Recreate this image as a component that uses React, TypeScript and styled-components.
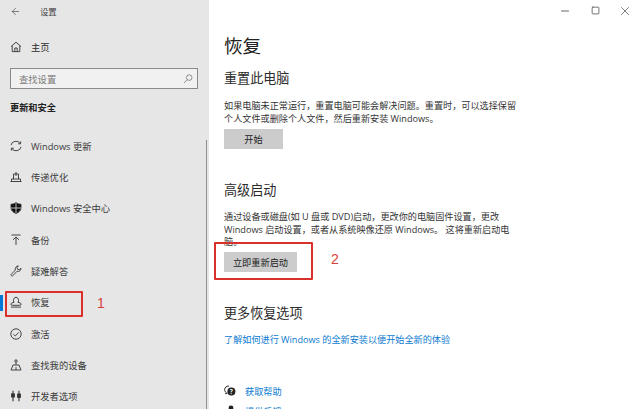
import styled, { createGlobalStyle } from 'styled-components'
import { ArrowLeft, Minus, Square, X } from 'lucide-react'
import type { ReactNode } from 'react'

const GlobalStyle = createGlobalStyle`
  html, body {
    margin: 0;
    padding: 0;
    height: 409px;
    overflow: hidden;
    background: #fff;
  }
  * {
    box-sizing: border-box;
  }
`

const Window = styled.div`
  position: relative;
  display: flex;
  width: 640px;
  height: 409px;
  overflow: hidden;
  font-family: "Open Sans", "Noto Sans CJK SC", sans-serif;
  color: #2b2b2b;
`

const Sidebar = styled.aside`
  position: relative;
  flex: 0 0 209px;
  height: 409px;
  background: #e6e6e6;
  display: flex;
  flex-direction: column;
  overflow: hidden;

  & > * {
    flex-shrink: 0;
  }
`

const TitleRow = styled.div`
  display: flex;
  align-items: center;
  height: 22px;
  padding-left: 10px;
  font-size: 8.4px;
  color: #444;
`

const TitleText = styled.span`
  margin-left: 19px;
`

const HomeRow = styled.div`
  display: flex;
  align-items: center;
  gap: 9px;
  height: 20px;
  margin-top: 15px;
  padding-left: 10px;
  font-size: 9.3px;
`

const SearchBox = styled.div`
  display: flex;
  align-items: center;
  justify-content: space-between;
  width: 188px;
  height: 21px;
  margin: 11px 0 0 10px;
  padding: 0 4px 0 8px;
  background: #f1f1f1;
  border: 1px solid #8a8a8a;
  font-size: 9.3px;
  color: #7c7c7c;
`

const SectionLabel = styled.div`
  height: 14px;
  line-height: 14px;
  margin: 12px 0 0 10px;
  font-size: 9.2px;
  font-weight: 700;
  color: #222;
`

const NavList = styled.nav`
  display: flex;
  flex-direction: column;
  margin-top: 15px;
`

const NavRow = styled.div<{ $active?: boolean }>`
  position: relative;
  display: flex;
  flex-shrink: 0;
  align-items: center;
  gap: 9px;
  height: 31.35px;
  padding-left: 10px;
  font-size: 9.3px;
  color: #3a3a3a;

  &::before {
    content: '';
    display: ${p => (p.$active ? 'block' : 'none')};
    position: absolute;
    left: 0;
    top: 8px;
    width: 3px;
    height: 16px;
    background: #0078d7;
  }
`

const IconSlot = styled.span`
  display: flex;
  align-items: center;
  justify-content: center;
  flex: 0 0 12px;
  width: 12px;
  height: 12px;
`

const ScrollThumb = styled.div`
  position: absolute;
  right: 2px;
  top: 140px;
  bottom: 0;
  width: 1.5px;
  background: #8f8f8f;
`

const Main = styled.main`
  flex: 1;
  display: flex;
  flex-direction: column;
  padding-left: 15px;
  background: #fff;

  & > * {
    flex-shrink: 0;
  }
`

const WindowControls = styled.div`
  display: flex;
  justify-content: flex-end;
  align-items: center;
  height: 21px;
  color: #555;
`

const ControlSlot = styled.span`
  display: flex;
  align-items: center;
  justify-content: center;
  width: 30px;
`

const PageTitle = styled.h1`
  margin: 12px 0 0;
  height: 26px;
  line-height: 26px;
  font-size: 18.6px;
  font-weight: 400;
  color: #222;
`

const SectionTitle = styled.h2<{ $gap: number }>`
  margin: ${p => p.$gap}px 0 0;
  height: 18px;
  line-height: 18px;
  font-size: 13.1px;
  font-weight: 400;
  color: #2b2b2b;
`

const Paragraph = styled.p<{ $gap: number }>`
  width: 296px;
  margin: ${p => p.$gap}px 0 0;
  font-size: 9.13px;
  line-height: 12.6px;
  color: #333;
`

const ActionButton = styled.div<{ $width: number; $gap: number }>`
  display: flex;
  align-items: center;
  justify-content: center;
  width: ${p => p.$width}px;
  height: 20px;
  margin-top: ${p => p.$gap}px;
  background: #cccccc;
  font-size: 9.2px;
  color: #222;
`

const PageLink = styled.a`
  display: block;
  margin-top: 11px;
  height: 14px;
  line-height: 14px;
  font-size: 9.13px;
  color: #0a7ad0;
`

const HelpList = styled.div`
  display: flex;
  flex-direction: column;
  gap: 6px;
  margin-top: 37px;
`

const HelpRow = styled.div`
  display: flex;
  flex-shrink: 0;
  align-items: center;
  gap: 9px;
  height: 14px;
  font-size: 9.2px;
  color: #0a7ad0;
`

const RedBox = styled.div<{ $left: number; $top: number; $w: number; $h: number }>`
  position: absolute;
  left: ${p => p.$left}px;
  top: ${p => p.$top}px;
  width: ${p => p.$w}px;
  height: ${p => p.$h}px;
  border: 2px solid #d9302c;
  border-radius: 1px;
`

const RedNumber = styled.span<{ $left: number; $top: number }>`
  position: absolute;
  left: ${p => p.$left}px;
  top: ${p => p.$top}px;
  font-family: "Liberation Sans", sans-serif;
  font-size: 14px;
  line-height: 16px;
  color: #d9403a;
`

const Glyph = ({ children, fill }: { children: ReactNode; fill?: string }) => (
  <svg width="12" height="12" viewBox="0 0 12 12" fill={fill ?? 'none'} stroke="#333" strokeWidth="0.9">
    {children}
  </svg>
)

const navItems: { label: string; icon: ReactNode; active?: boolean }[] = [
  {
    label: 'Windows 更新',
    icon: (
      <Glyph>
        <path d="M1 5.2A5 4.6 0 0 1 10.2 3.4" />
        <path d="M11 6.8A5 4.6 0 0 1 1.8 8.6" />
        <path d="M10.6 1.4v2.4H8.2M1.4 10.6V8.2h2.4" />
      </Glyph>
    ),
  },
  {
    label: '传递优化',
    icon: (
      <Glyph>
        <path d="M.5 10.5h11M1.5 10.5V8h9v2.5M3.5 8V3h5v5M6 1v4" />
      </Glyph>
    ),
  },
  {
    label: 'Windows 安全中心',
    icon: (
      <Glyph fill="#111">
        <path d="M6 .6C4.5 1.8 3 2.2 1 2.2v3.6c0 2.6 2 4.5 5 5.6 3-1.1 5-3 5-5.6V2.2C9 2.2 7.5 1.8 6 .6z" />
        <path d="M6 1v10M1 6h10" stroke="#e6e6e6" strokeWidth="0.8" />
      </Glyph>
    ),
  },
  {
    label: '备份',
    icon: (
      <Glyph>
        <path d="M1.5 1h9M6 11V3M3 5.8L6 3l3 2.8" />
      </Glyph>
    ),
  },
  {
    label: '疑难解答',
    icon: (
      <Glyph>
        <path d="M1 9.6L5.4 5C4.8 3 6.2.8 8.4.9L7 2.6l.6 1.7 1.8.4L11 3.2c.2 2.2-1.9 3.8-4 3.1l-4.3 4.5c-.7.6-2.3-.5-1.7-1.2z" />
      </Glyph>
    ),
  },
  {
    label: '恢复',
    active: true,
    icon: (
      <Glyph>
        <path d="M3.8 6.2C3 4.8 3.4 1.2 6 1.2s3 3.6 2.2 5" />
        <path d="M4.2 6.4C2.4 6.6.9 7 .9 8.2c0 .8.5 1.1 1.2 1.1h7.8c.7 0 1.2-.3 1.2-1.1 0-1.2-1.5-1.6-3.3-1.8" />
        <path d="M1 11.1h10" />
      </Glyph>
    ),
  },
  {
    label: '激活',
    icon: (
      <Glyph>
        <circle cx="6" cy="6" r="5.2" />
        <path d="M3.4 6.2L5.3 8l3.4-3.6" />
      </Glyph>
    ),
  },
  {
    label: '查找我的设备',
    icon: (
      <Glyph>
        <circle cx="6" cy="2" r="1.2" />
        <path d="M6 3.2V6M3 6h6l2 5H1zM6 8v3" />
      </Glyph>
    ),
  },
  {
    label: '开发者选项',
    icon: (
      <Glyph>
        <path d="M3 .8v3M3 7v4.2M9 .8V4M9 7.4v3.8" strokeWidth="1.1" />
        <rect x="1.6" y="3.8" width="2.8" height="3.2" fill="#333" />
        <rect x="7.6" y="4" width="2.8" height="3.4" fill="#333" />
      </Glyph>
    ),
  },
]

export default function App() {
  return (
    <Window>
      <GlobalStyle />
      <Sidebar>
        <TitleRow>
          <ArrowLeft size={11} strokeWidth={1.4} />
          <TitleText>设置</TitleText>
        </TitleRow>
        <HomeRow>
          <IconSlot>
            <Glyph>
              <path d="M1 5.6L6 1.2l5 4.4M2.2 4.8v5.8h7.6V4.8M4.8 10.6V7h2.4v3.6" />
            </Glyph>
          </IconSlot>
          主页
        </HomeRow>
        <SearchBox>
          查找设置
          <svg width="10" height="10" viewBox="0 0 10 10" fill="none" stroke="#777" strokeWidth="0.8">
            <circle cx="6.2" cy="3.6" r="2.8" />
            <path d="M4.2 5.7L1 9" />
          </svg>
        </SearchBox>
        <SectionLabel>更新和安全</SectionLabel>
        <NavList>
          {navItems.map(item => (
            <NavRow key={item.label} $active={item.active}>
              <IconSlot>{item.icon}</IconSlot>
              {item.label}
            </NavRow>
          ))}
        </NavList>
        <ScrollThumb />
      </Sidebar>
      <Main>
        <WindowControls>
          <ControlSlot><Minus size={12} strokeWidth={1.8} /></ControlSlot>
          <ControlSlot><Square size={9} strokeWidth={2.2} /></ControlSlot>
          <ControlSlot><X size={14} strokeWidth={1.3} /></ControlSlot>
        </WindowControls>
        <PageTitle>恢复</PageTitle>
        <SectionTitle $gap={10}>重置此电脑</SectionTitle>
        <Paragraph $gap={13}>
          如果电脑未正常运行，重置电脑可能会解决问题。重置时，可以选择保留个人文件或删除个人文件，然后重新安装 Windows。
        </Paragraph>
        <ActionButton $width={59} $gap={4}>开始</ActionButton>
        <SectionTitle $gap={32}>高级启动</SectionTitle>
        <Paragraph $gap={12}>
          通过设备或磁盘(如 U 盘或 DVD)启动，更改你的电脑固件设置，更改 Windows 启动设置，或者从系统映像还原 Windows。 这将重新启动电脑。
        </Paragraph>
        <ActionButton $width={73} $gap={3}>立即重新启动</ActionButton>
        <SectionTitle $gap={32}>更多恢复选项</SectionTitle>
        <PageLink>了解如何进行 Windows 的全新安装以便开始全新的体验</PageLink>
        <HelpList>
          <HelpRow>
            <IconSlot>
              <svg width="12" height="12" viewBox="0 0 12 12">
                <path d="M5 1C2.4 1 .6 2.6.6 4.6c0 1.2.6 2.1 1.5 2.8L1.8 9l1.7-1" fill="none" stroke="#222" strokeWidth="1" />
                <circle cx="7.4" cy="6.4" r="4" fill="#222" />
                <text x="7.4" y="8.8" textAnchor="middle" fontSize="6.4" fontWeight="700" fill="#fff">?</text>
              </svg>
            </IconSlot>
            获取帮助
          </HelpRow>
          <HelpRow>
            <IconSlot>
              <svg width="12" height="12" viewBox="0 0 12 12" fill="#222">
                <circle cx="7" cy="3" r="2.4" />
                <path d="M2.4 11c0-2.8 2-4.4 4.6-4.4s3.6 1.6 3.6 4.4z" />
              </svg>
            </IconSlot>
            提供反馈
          </HelpRow>
        </HelpList>
      </Main>
      <RedBox $left={5} $top={291} $w={78} $h={26} />
      <RedNumber $left={97} $top={295}>1</RedNumber>
      <RedBox $left={214} $top={242} $w={99} $h={38} />
      <RedNumber $left={331} $top={251}>2</RedNumber>
    </Window>
  )
}
